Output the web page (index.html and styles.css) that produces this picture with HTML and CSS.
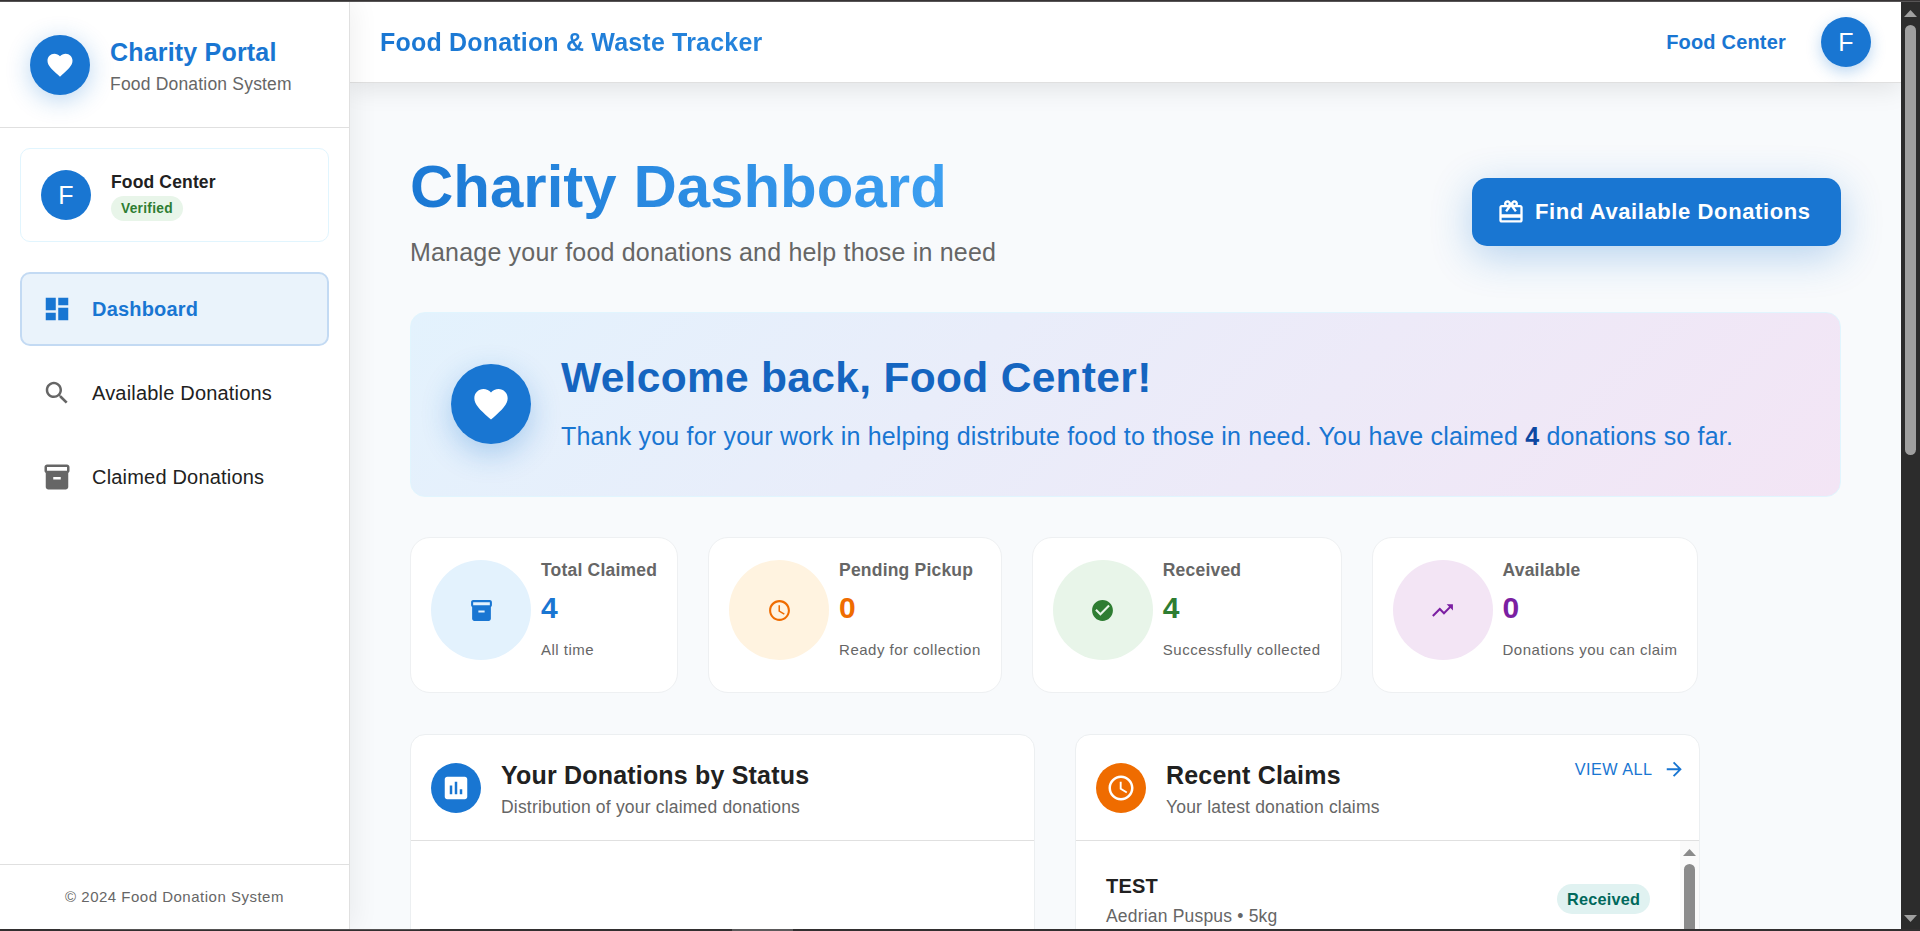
FILE: index.html
```html
<!DOCTYPE html>
<html lang="en">
<head>
<meta charset="utf-8">
<title>Charity Dashboard</title>
<link rel="stylesheet" href="styles.css">
</head>
<body>
<svg class="sprite" aria-hidden="true">
  <symbol id="heart" viewBox="0 0 24 24"><path d="M12 21.35l-1.45-1.32C5.4 15.36 2 12.28 2 8.5 2 5.42 4.42 3 7.5 3c1.74 0 3.41.81 4.5 2.09C13.09 3.81 14.76 3 16.5 3 19.58 3 22 5.42 22 8.5c0 3.78-3.4 6.86-8.55 11.54L12 21.35z"/></symbol>
  <symbol id="dashboard" viewBox="0 0 24 24"><path d="M3 13h8V3H3v10zm0 8h8v-6H3v6zm10 0h8V11h-8v10zm0-18v6h8V3h-8z"/></symbol>
  <symbol id="search" viewBox="0 0 24 24"><path d="M15.5 14h-.79l-.28-.27C15.41 12.59 16 11.11 16 9.5 16 5.91 13.09 3 9.5 3S3 5.91 3 9.5 5.91 16 9.5 16c1.61 0 3.09-.59 4.23-1.57l.27.28v.79l5 4.99L20.49 19l-4.99-5zm-6 0C7.01 14 5 11.99 5 9.5S7.01 5 9.5 5 14 7.01 14 9.5 11.99 14 9.5 14z"/></symbol>
  <symbol id="inventory" viewBox="0 0 24 24"><path d="M20 2H4c-1 0-2 .9-2 2v3.01c0 .72.43 1.34 1 1.69V20c0 1.1 1.1 2 2 2h14c.9 0 2-.9 2-2V8.7c.57-.35 1-.97 1-1.69V4c0-1.1-1-2-2-2zm-5 12H9v-2h6v2zm5-7H4V4h16v3z"/></symbol>
  <symbol id="clock" viewBox="0 0 24 24"><path d="M11.99 2C6.47 2 2 6.48 2 12s4.47 10 9.99 10C17.52 22 22 17.52 22 12S17.52 2 11.99 2zM12 20c-4.42 0-8-3.58-8-8s3.58-8 8-8 8 3.58 8 8-3.58 8-8 8zm.5-13H11v6l5.25 3.15.75-1.23-4.5-2.67z"/></symbol>
  <symbol id="check" viewBox="0 0 24 24"><path d="M12 2C6.48 2 2 6.48 2 12s4.48 10 10 10 10-4.48 10-10S17.52 2 12 2zm-2 15l-5-5 1.41-1.41L10 14.17l7.59-7.59L19 8l-9 9z"/></symbol>
  <symbol id="trend" viewBox="0 0 24 24"><path d="M16 6l2.29 2.29-4.88 4.88-4-4L2 16.59 3.41 18l6-6 4 4 6.3-6.29L22 12V6z"/></symbol>
  <symbol id="chart" viewBox="0 0 24 24"><path d="M19 3H5c-1.1 0-2 .9-2 2v14c0 1.1.9 2 2 2h14c1.1 0 2-.9 2-2V5c0-1.1-.9-2-2-2zM9 17H7v-7h2v7zm4 0h-2V7h2v10zm4 0h-2v-4h2v4z"/></symbol>
  <symbol id="arrow" viewBox="0 0 24 24"><path d="M12 4l-1.41 1.41L16.17 11H4v2h12.17l-5.58 5.59L12 20l8-8z"/></symbol>
  <symbol id="gift" viewBox="0 0 24 24"><path d="M20 6h-2.18c.11-.31.18-.65.18-1 0-1.66-1.34-3-3-3-1.05 0-1.96.54-2.5 1.35l-.5.67-.5-.68C10.96 2.54 10.05 2 9 2 7.34 2 6 3.34 6 5c0 .35.07.69.18 1H4c-1.11 0-1.99.89-1.99 2L2 19c0 1.11.89 2 2 2h16c1.11 0 2-.89 2-2V8c0-1.11-.89-2-2-2zm-5-2c.55 0 1 .45 1 1s-.45 1-1 1-1-.45-1-1 .45-1 1-1zM9 4c.55 0 1 .45 1 1s-.45 1-1 1-1-.45-1-1 .45-1 1-1zm11 15H4v-2h16v2zm0-5H4V8h5.08L7 10.83 8.62 12 11 8.76l1-1.36 1 1.36L15.38 12 17 10.83 14.92 8H20v6z"/></symbol>
</svg>
<div class="window">
  <div class="frame-top"></div>
  <div class="app">
    <aside class="sidebar">
      <div class="brand">
        <div class="brand-logo"><svg class="icon-30"><use href="#heart"/></svg></div>
        <div>
          <div class="brand-title">Charity Portal</div>
          <div class="brand-sub">Food Donation System</div>
        </div>
      </div>
      <div class="user-card">
        <div class="avatar">F</div>
        <div class="user-info">
          <div class="user-name">Food Center</div>
          <span class="verified">Verified</span>
        </div>
      </div>
      <nav class="nav">
        <a class="nav-item active"><svg class="icon-30"><use href="#dashboard"/></svg><span>Dashboard</span></a>
        <a class="nav-item"><svg class="icon-30"><use href="#search"/></svg><span>Available Donations</span></a>
        <a class="nav-item"><svg class="icon-30"><use href="#inventory"/></svg><span>Claimed Donations</span></a>
      </nav>
      <footer class="side-footer"><span>© 2024 Food Donation System</span></footer>
    </aside>
    <div class="content">
      <header class="appbar">
        <div class="app-title">Food Donation &amp; Waste Tracker</div>
        <div class="app-user">Food Center</div>
        <div class="avatar raised">F</div>
      </header>
      <main class="main">
        <section class="page-head">
          <div>
            <h1 class="page-title">Charity Dashboard</h1>
            <p class="page-sub">Manage your food donations and help those in need</p>
          </div>
          <button class="find-btn"><svg class="icon-28"><use href="#gift"/></svg><span>Find Available Donations</span></button>
        </section>
        <section class="banner">
          <div class="banner-logo"><svg class="icon-40"><use href="#heart"/></svg></div>
          <div>
            <h2 class="banner-title">Welcome back, Food Center!</h2>
            <p class="banner-text">Thank you for your work in helping distribute food to those in need. You have claimed <strong>4</strong> donations so far.</p>
          </div>
        </section>
        <section class="stats">
          <div class="stat blue">
            <div class="stat-icon"><svg class="icon-25"><use href="#inventory"/></svg></div>
            <div><div class="stat-label">Total Claimed</div><div class="stat-value">4</div><div class="stat-note">All time</div></div>
          </div>
          <div class="stat orange">
            <div class="stat-icon"><svg class="icon-25"><use href="#clock"/></svg></div>
            <div><div class="stat-label">Pending Pickup</div><div class="stat-value">0</div><div class="stat-note">Ready for collection</div></div>
          </div>
          <div class="stat green">
            <div class="stat-icon"><svg class="icon-25"><use href="#check"/></svg></div>
            <div><div class="stat-label">Received</div><div class="stat-value">4</div><div class="stat-note">Successfully collected</div></div>
          </div>
          <div class="stat purple">
            <div class="stat-icon"><svg class="icon-25"><use href="#trend"/></svg></div>
            <div><div class="stat-label">Available</div><div class="stat-value">0</div><div class="stat-note">Donations you can claim</div></div>
          </div>
        </section>
        <section class="panels">
          <article class="panel">
            <div class="panel-head">
              <div class="panel-icon"><svg class="icon-30"><use href="#chart"/></svg></div>
              <div class="panel-titles"><h3 class="panel-title">Your Donations by Status</h3><p class="panel-sub">Distribution of your claimed donations</p></div>
            </div>
          </article>
          <article class="panel">
            <div class="panel-head">
              <div class="panel-icon warm"><svg class="icon-30"><use href="#clock"/></svg></div>
              <div class="panel-titles"><h3 class="panel-title">Recent Claims</h3><p class="panel-sub">Your latest donation claims</p></div>
              <a class="view-all"><span>VIEW ALL</span><svg class="icon-22"><use href="#arrow"/></svg></a>
            </div>
            <div class="claims">
              <div class="claim">
                <div class="claim-info"><div class="claim-name">TEST</div><div class="claim-sub">Aedrian Puspus • 5kg</div></div>
                <span class="received">Received</span>
              </div>
              <div class="inner-scroll"><i class="tri-up"></i><i class="inner-thumb"></i></div>
            </div>
          </article>
        </section>
      </main>
    </div>
    <div class="page-scroll"><i class="tri-up"></i><i class="thumb"></i><i class="tri-down"></i></div>
  </div>
  <div class="frame-bottom"><i class="tab"></i><i class="tab-active"></i></div>
</div>
</body>
</html>
```
FILE: styles.css
```css
* { box-sizing: border-box; }
body { margin: 0; font-family: "Liberation Sans", Arial, sans-serif; color: #212121; background: #f8fafc; overflow: hidden; }
h1, h2, h3, p { margin: 0; }
svg { fill: currentColor; display: block; flex: none; }
i { display: block; flex: none; }
.sprite { display: none; }
.icon-22 { width: 22.5px; height: 22.5px; }
.icon-25 { width: 25px; height: 25px; }
.icon-28 { width: 28px; height: 28px; }
.icon-30 { width: 30px; height: 30px; }
.icon-40 { width: 40px; height: 40px; }

.window { display: flex; flex-direction: column; width: 1920px; height: 931px; overflow: hidden; letter-spacing: .19px; }
.frame-top { height: 2px; flex: none; background: #373435; border-bottom: 1px solid #575556; }
.frame-bottom { height: 2px; flex: none; display: flex; background: #322f30; padding-left: 60px; position: relative; z-index: 5; }
.tab { width: 360px; height: 2px; border-top: 1px solid #555354; margin-right: 312px; }
.tab-active { width: 61px; height: 2px; background: #5c5a5b; }
.app { display: flex; flex: 1; min-height: 0; }

/* Sidebar */
.sidebar { width: 350px; flex: none; display: flex; flex-direction: column; background: #fff; border-right: 1px solid #e0e0e0; box-shadow: 5px 0 25px rgba(0,0,0,.06); position: relative; z-index: 3; }
.brand { display: flex; align-items: center; gap: 20px; padding: 30px; height: 126px; border-bottom: 1px solid #e0e0e0; }
.brand-logo { width: 60px; height: 60px; border-radius: 50%; background: #1976d2; color: #fff; display: grid; place-items: center; box-shadow: 0 5px 25px rgba(25,118,210,.3); flex: none; }
.brand-title { font-size: 25px; line-height: 40px; font-weight: 700; color: #1976d2; white-space: nowrap; }
.brand-sub { font-size: 17.5px; line-height: 25px; color: #666; white-space: nowrap; }
.user-card { display: flex; align-items: center; gap: 20px; height: 94px; margin: 20px 20px 30px; padding: 20px; border: 1px solid #e1f5fe; border-radius: 10px; }
.avatar { width: 50px; height: 50px; border-radius: 50%; background: #1976d2; color: #fff; display: grid; place-items: center; font-size: 25px; letter-spacing: 0; flex: none; }
.raised { box-shadow: 0 5px 15px rgba(25,118,210,.3); }
.user-info { display: flex; flex-direction: column; align-items: flex-start; }
.user-name { font-size: 17.5px; line-height: 27px; font-weight: 700; letter-spacing: .15px; }
.verified { height: 25px; line-height: 25px; border-radius: 13px; padding: 0 10px; background: #e8f5e9; color: #2e7d32; font-size: 13.75px; font-weight: 700; letter-spacing: .28px; }
.nav { display: flex; flex-direction: column; gap: 10px; padding: 0 20px; }
.nav-item { display: flex; align-items: center; gap: 20px; height: 74px; padding: 0 20px; border: 2px solid transparent; border-radius: 10px; font-size: 20px; color: #212121; }
.nav-item svg { color: #666; }
.nav-item.active { background: #eaf3fb; border-color: #c3daf3; color: #1976d2; font-weight: 700; }
.nav-item.active svg { color: #1976d2; }
.side-footer { margin-top: auto; height: 65px; padding-bottom: 2px; border-top: 1px solid #e0e0e0; display: grid; place-items: center; font-size: 15px; color: #666; letter-spacing: .5px; }

/* Top bar */
.content { flex: 1; min-width: 0; display: flex; flex-direction: column; background: #f8fafc; overflow: hidden; }
.appbar { display: flex; align-items: center; height: 81px; flex: none; padding: 0 30px; background: #fff; border-bottom: 1px solid #e0e0e0; box-shadow: 0 5px 25px rgba(0,0,0,.1); position: relative; z-index: 2; }
.app-title { flex: 1; font-size: 25px; line-height: 40px; font-weight: 700; background: linear-gradient(45deg, #1976d2, #42a5f5); -webkit-background-clip: text; background-clip: text; color: transparent; }
.app-user { font-size: 20px; font-weight: 700; color: #1976d2; margin-right: 35px; }

/* Page heading */
.main { padding: 69px 60px 0; flex: 1; min-height: 0; overflow: hidden; }
.page-head { display: flex; justify-content: space-between; align-items: center; height: 120px; margin-bottom: 40px; }
.page-title { font-size: 60px; line-height: 70px; font-weight: 700; letter-spacing: 0; margin-bottom: 10px; background: linear-gradient(45deg, #1976d2, #42a5f5); -webkit-background-clip: text; background-clip: text; color: transparent; }
.page-sub { font-size: 25px; line-height: 40px; color: #666; }
.find-btn { display: flex; align-items: center; gap: 10px; width: 369px; height: 68px; padding: 0 0 0 25px; border: 0; border-radius: 15px; background: #1976d2; color: #fff; font: 700 22px "Liberation Sans", Arial, sans-serif; letter-spacing: .6px; white-space: nowrap; box-shadow: 0 10px 40px rgba(25,118,210,.3); }

/* Welcome banner */
.banner { display: flex; align-items: center; gap: 30px; height: 185px; padding: 0 40px 1px; border: 1px solid #e1f5fe; border-radius: 15px; background: linear-gradient(135deg, #e3f2fd 0%, #f3e5f5 100%); margin-bottom: 40px; }
.banner-logo { width: 80px; height: 80px; border-radius: 50%; background: #1976d2; color: #fff; display: grid; place-items: center; flex: none; box-shadow: 0 10px 30px rgba(25,118,210,.3); }
.banner-title { font-size: 42.5px; line-height: 52px; font-weight: 700; color: #1565c0; margin-bottom: 12px; letter-spacing: .31px; }
.banner-text { font-size: 25px; line-height: 40px; color: #1976d2; white-space: nowrap; }
.banner-text strong { color: #0d47a1; }

/* Stat cards */
.stats { display: flex; gap: 30px; margin-bottom: 41px; }
.stat { display: flex; gap: 10px; height: 156px; padding: 20px; border: 1px solid #eef0f2; border-radius: 20px; background: #fff; white-space: nowrap; }
.stat-icon { width: 100px; height: 100px; margin-top: 2px; border-radius: 50%; display: grid; place-items: center; flex: none; }
.stat-label { font-size: 17.5px; line-height: 25px; font-weight: 700; color: #666; letter-spacing: .2px; }
.stat-value { font-size: 30px; line-height: 49px; font-weight: 700; margin-bottom: 5px; letter-spacing: 0; }
.stat-note { font-size: 15px; line-height: 25px; color: #666; letter-spacing: .5px; }
.blue .stat-icon { background: #e3f2fd; }
.blue .stat-icon, .blue .stat-value { color: #1976d2; }
.orange .stat-icon { background: #fff3e0; }
.orange .stat-icon, .orange .stat-value { color: #ef6c00; }
.green .stat-icon { background: #e8f5e9; }
.green .stat-icon, .green .stat-value { color: #2e7d32; }
.purple .stat-icon { background: #f3e5f5; }
.purple .stat-icon, .purple .stat-value { color: #7b1fa2; }

/* Panels */
.panels { display: grid; grid-template-columns: 625px 625px; gap: 40px; }
.panel { height: 560px; border: 1px solid #eceff1; border-radius: 15px; background: #fff; overflow: hidden; }
.panel-head { display: flex; align-items: center; gap: 20px; height: 106px; padding: 0 20px; border-bottom: 1px solid #e0e0e0; }
.panel-icon { width: 50px; height: 50px; border-radius: 50%; background: #1976d2; color: #fff; display: grid; place-items: center; flex: none; }
.panel-icon.warm { background: #ef6c00; }
.panel-titles { flex: 1; }
.panel-title { font-size: 25px; line-height: 40px; font-weight: 700; }
.panel-sub { font-size: 17.5px; line-height: 25px; color: #666; }
.view-all { display: flex; align-items: center; gap: 10px; align-self: flex-start; margin: 23px -6px 0 0; font-size: 16.25px; color: #1976d2; letter-spacing: .46px; }
.claims { display: flex; height: 300px; }
.claim { flex: 1; display: flex; justify-content: space-between; align-items: center; height: 116px; padding: 0 30px; }
.claim-info { padding-top: 2px; }
.claim-name { font-size: 20px; line-height: 32px; font-weight: 700; }
.claim-sub { font-size: 17.5px; line-height: 28px; color: #666; }
.received { height: 30px; line-height: 30px; padding: 0 10px; border-radius: 15px; background: #e0f2f1; color: #00695c; font-size: 16.25px; font-weight: 700; }
.inner-scroll { width: 19px; background: #fafafa; display: flex; flex-direction: column; align-items: center; padding-top: 8px; }
.tri-up { width: 13px; height: 7px; background: #a0a0a0; clip-path: polygon(50% 0, 100% 100%, 0 100%); }
.tri-down { width: 13px; height: 7px; background: #a0a0a0; clip-path: polygon(0 0, 100% 0, 50% 100%); margin-top: auto; }
.inner-scroll .tri-up { background: #8b8b8b; }
.inner-thumb { width: 11px; height: 300px; margin-top: 8px; border-radius: 6px; background: #8b8b8b; }
.page-scroll { width: 19px; flex: none; background: #2c2c2c; display: flex; flex-direction: column; align-items: center; padding: 8px 0 7px; position: relative; z-index: 4; }
.thumb { width: 11px; height: 430px; margin-top: 8px; border-radius: 6px; background: #9f9f9f; }
```
